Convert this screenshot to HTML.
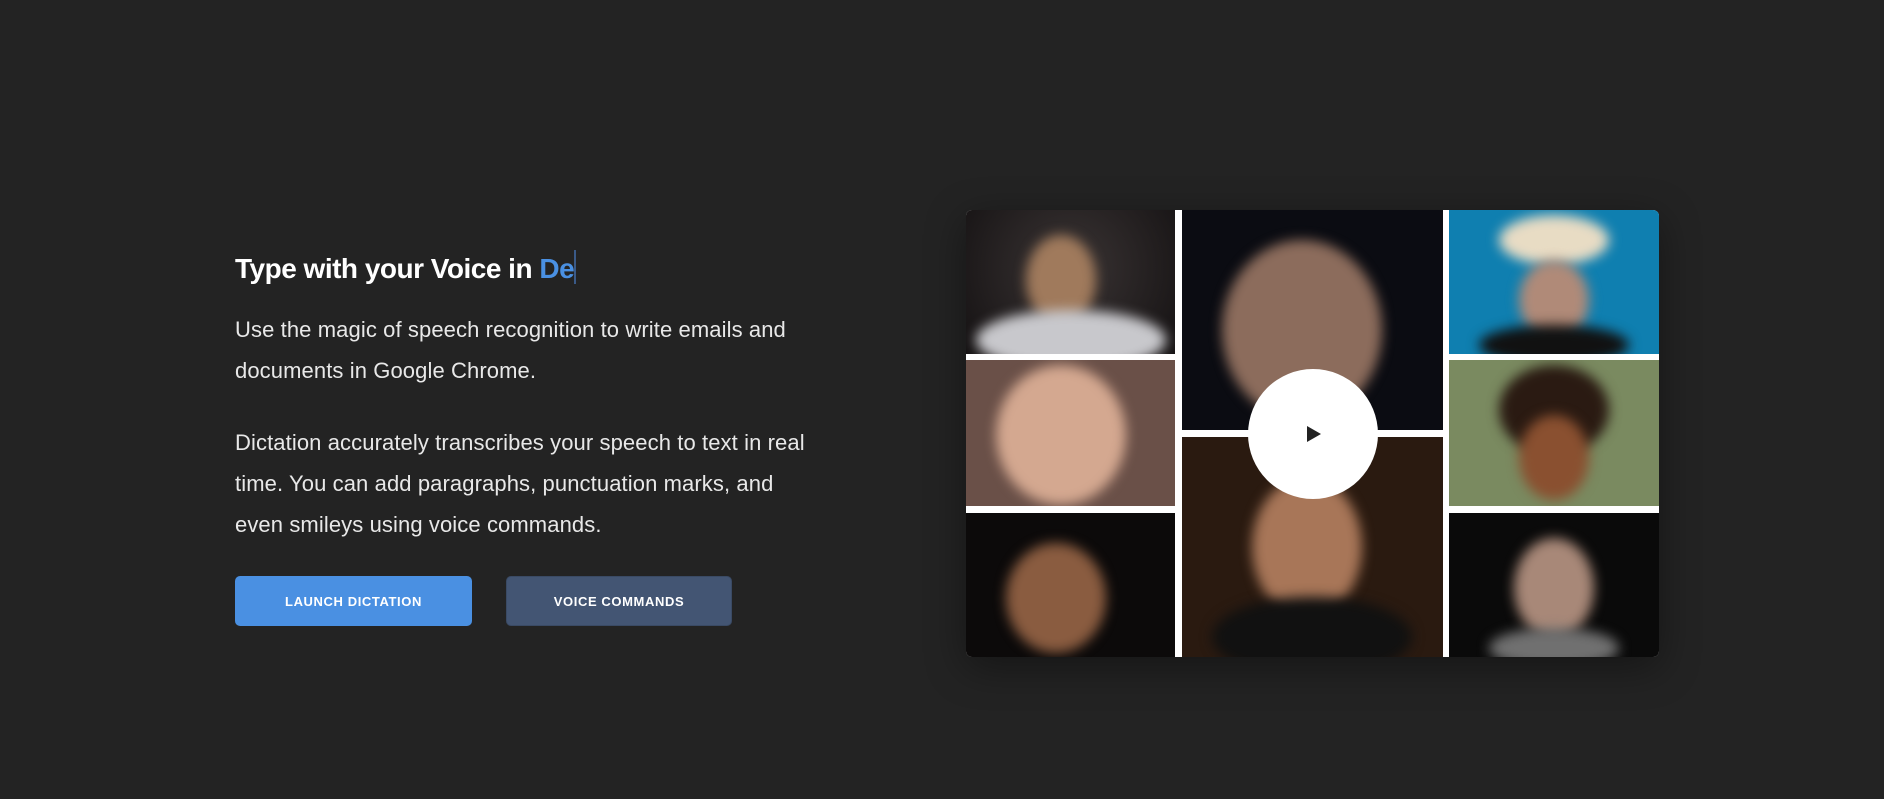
<!DOCTYPE html>
<html><head><style>
*{margin:0;padding:0;box-sizing:border-box}
body{width:1884px;height:799px;background:#232323;font-family:"Liberation Sans",sans-serif;position:relative;overflow:hidden}
h1{position:absolute;left:235px;top:250px;font-size:28px;font-weight:bold;color:#fff;letter-spacing:-0.5px}
h1 span{color:#4a90e2}
h1 i{display:inline-block;width:2px;height:34px;background:#3a5a88;vertical-align:-6px}
p{position:absolute;left:235px;color:#e8e8e8;font-size:22px;line-height:41px;letter-spacing:0.1px;white-space:nowrap}
.btn{position:absolute;top:576px;height:50px;border-radius:5px;color:#fff;font-size:13px;font-weight:bold;letter-spacing:0.6px;display:flex;align-items:center;justify-content:center}
.grid{position:absolute;left:966px;top:210px;width:693px;height:447px;background:#fff;border-radius:6px;overflow:hidden;box-shadow:0 10px 40px rgba(0,0,0,.4)}
.c{position:absolute;overflow:hidden}
.f{position:absolute;border-radius:50%;filter:blur(6px)}
.play{position:absolute;left:1248px;top:369px;width:130px;height:130px;border-radius:50%;background:#fff}
.play:after{content:"";position:absolute;left:59px;top:57px;border-left:14px solid #222;border-top:8px solid transparent;border-bottom:8px solid transparent}
</style></head><body>
<h1>Type with your Voice in <span>De</span><i></i></h1>
<p style="top:309px">Use the magic of speech recognition to write emails and<br>documents in Google Chrome.</p>
<p style="top:422px">Dictation accurately transcribes your speech to text in real<br>time. You can add paragraphs, punctuation marks, and<br>even smileys using voice commands.</p>
<div class="btn" style="left:235px;width:237px;background:#4a90e2">LAUNCH DICTATION</div>
<div class="btn" style="left:506px;width:226px;background:#435573;border:1px solid #3a4a64">VOICE COMMANDS</div>
<div class="grid">
<div class="c" style="left:0;top:0;width:209px;height:144px;background:radial-gradient(circle at 50% 40%,#3a3434,#151213)"><div class="f" style="left:60px;top:25px;width:70px;height:90px;background:#a07a5c"></div><div class="f" style="left:10px;top:100px;width:190px;height:60px;background:#c8c8cc"></div></div>
<div class="c" style="left:0;top:150px;width:209px;height:146px;background:#6a5048"><div class="f" style="left:30px;top:5px;width:130px;height:140px;background:#d4a890"></div></div>
<div class="c" style="left:0;top:303px;width:209px;height:144px;background:#0c0a0a"><div class="f" style="left:40px;top:30px;width:100px;height:110px;background:#8a5c40"></div></div>
<div class="c" style="left:216px;top:0;width:261px;height:220px;background:#0b0c12"><div class="f" style="left:40px;top:30px;width:160px;height:180px;background:#8c6c5c"></div></div>
<div class="c" style="left:216px;top:227px;width:261px;height:220px;background:#2a1a10"><div class="f" style="left:70px;top:40px;width:110px;height:140px;background:#a87658"></div><div class="f" style="left:30px;top:160px;width:200px;height:80px;background:#111"></div></div>
<div class="c" style="left:483px;top:0;width:210px;height:144px;background:#0f7fb0"><div class="f" style="left:50px;top:5px;width:110px;height:50px;background:#e8dcc4"></div><div class="f" style="left:70px;top:50px;width:70px;height:80px;background:#b08a78"></div><div class="f" style="left:30px;top:115px;width:150px;height:40px;background:#111"></div></div>
<div class="c" style="left:483px;top:150px;width:210px;height:146px;background:#7a8a60"><div class="f" style="left:50px;top:5px;width:110px;height:90px;background:#2a1a12"></div><div class="f" style="left:70px;top:55px;width:70px;height:85px;background:#8a5030"></div></div>
<div class="c" style="left:483px;top:303px;width:210px;height:144px;background:#0a0a0a"><div class="f" style="left:65px;top:25px;width:80px;height:100px;background:#a88878"></div><div class="f" style="left:40px;top:115px;width:130px;height:40px;background:#707070"></div></div>
</div>
<div class="play"></div>
</body></html>
